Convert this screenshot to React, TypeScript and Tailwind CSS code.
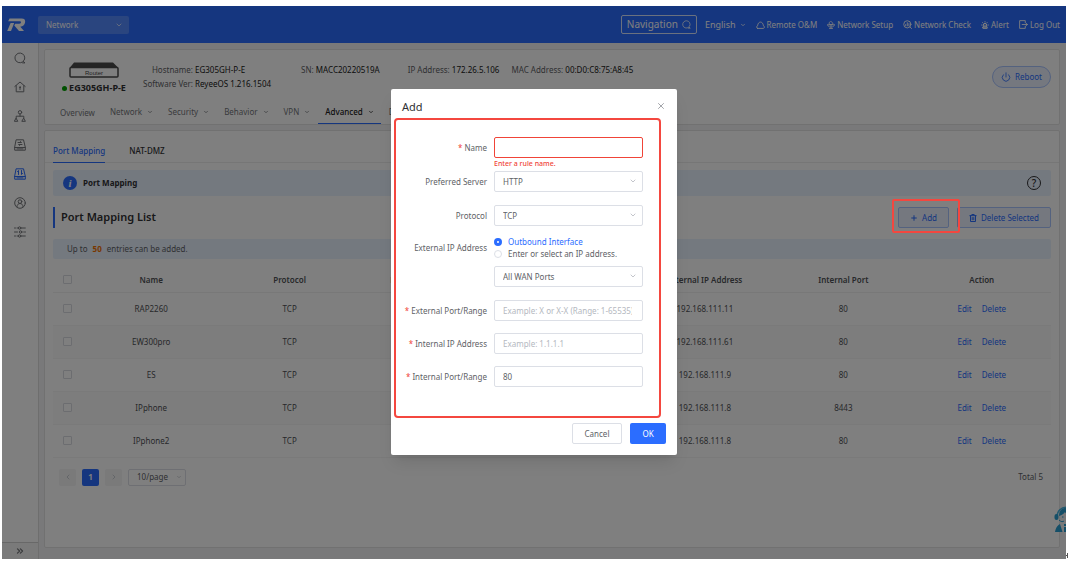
import React from "react";
import {
  ChevronDown,
  ChevronLeft,
  ChevronRight,
  ChevronsRight,
  Plus,
  Power,
  Siren,
  X,
} from "lucide-react";

const rows = [
  { name: "RAP2260", ip: "192.168.111.11", port: "80" },
  { name: "EW300pro", ip: "192.168.111.61", port: "80" },
  { name: "ES", ip: "192.168.111.9", port: "80" },
  { name: "IPphone", ip: "192.168.111.8", port: "8443" },
  { name: "IPphone2", ip: "192.168.111.8", port: "80" },
];

const line = {
  fill: "none",
  stroke: "currentColor",
  strokeWidth: 1,
  strokeLinecap: "round" as const,
  strokeLinejoin: "round" as const,
};

function Logo() {
  return (
    <svg viewBox="0 0 20 14" className="h-3.5 w-5 shrink-0" aria-label="Reyee" fill="#fff">
      <path d="M3.500 0.500H15.500Q20 0.500 19 4.800Q18.200 8.400 14.300 8.800L18 13H13L8.300 7.600L9.200 5.800H13Q14.700 5.800 15 4.500Q15.200 3.300 13.800 3.300H2.200Z" />
      <path d="M4.600 5H8.200L5 13H1.200Z" />
    </svg>
  );
}

function SearchIcon({ className }: { className: string }) {
  return (
    <svg viewBox="0 0 12 12" className={className} {...line}>
      <path d="M8.600 10A4.900 4.900 0 1 1 10.200 8.200L9 9.200L11 10.900H8.600" />
    </svg>
  );
}

function HomeIcon() {
  return (
    <svg viewBox="0 0 12 12" className="size-3" {...line}>
      <path d="M0.800 5.500 6 1l5.200 4.500M2.200 4.600v6.200h7.600V4.600M6 6.500v2" />
      <circle cx="6" cy="6.200" r="0.500" />
    </svg>
  );
}

function TreeIcon() {
  return (
    <svg viewBox="0 0 12 12" className="size-3" {...line}>
      <circle cx="6" cy="2.300" r="1.700" />
      <path d="M6 4v2.200M2.200 8.300V6.200h7.600v2.100" />
      <path d="M2.200 8.500 3.800 11.300H0.700ZM9.800 8.500 11.400 11.300H8.200Z" />
    </svg>
  );
}

function DriveIcon({ children }: { children: React.ReactNode }) {
  return (
    <svg viewBox="0 0 12 12" className="size-3" {...line}>
      <path d="M2.500 0.800h7L11.300 8.300v2.900H0.700V8.300ZM0.700 8.500h10.600M3 9.900h6" />
      {children}
    </svg>
  );
}

function UserIcon() {
  return (
    <svg viewBox="0 0 12 12" className="size-3" {...line}>
      <circle cx="6" cy="6" r="5.300" />
      <circle cx="6" cy="4.600" r="1.800" />
      <path d="M2.900 9.800C3 7.600 4.400 6.500 6 6.500s3 1.100 3.100 3.300" />
    </svg>
  );
}

function SlidersIcon() {
  return (
    <svg viewBox="0 0 12 12" className="size-3" {...line}>
      <path d="M0.500 2h1M3 2h1M7.300 2h4M0.500 6h3M8.800 6h0.500M10.500 6h1M0.500 10h1M3 10h1M7.300 10h4" />
      <circle cx="5.600" cy="2" r="1.200" />
      <circle cx="6.500" cy="6" r="1.200" />
      <circle cx="5.600" cy="10" r="1.200" />
    </svg>
  );
}

function RouterPicture() {
  return (
    <svg viewBox="0 0 50 16" className="h-4 w-[50px]">
      <path d="M5 0.500H44L49 5.500H1Z" fill="#4a4a4a" />
      <rect x="1" y="5.500" width="48" height="9.500" rx="1" fill="#fff" stroke="#4a4a4a" strokeWidth="1.500" />
      <text x="25" y="13" textAnchor="middle" fontSize="6" fill="#444" fontFamily="Liberation Sans, sans-serif">
        Router
      </text>
    </svg>
  );
}

function CloudIcon() {
  return (
    <svg viewBox="0 0 10 10" className="h-2.5 w-[9px]" {...line}>
      <path d="M1.800 8.800H8.200C9.800 8.300 9.700 6.300 8.200 5.800C8 3.500 6.800 1.800 5 1.800S2 3.500 1.800 5.800C0.300 6.300 0.200 8.300 1.800 8.800Z" />
    </svg>
  );
}

function SetupIcon() {
  return (
    <svg viewBox="0 0 10 10" className="size-2" {...line}>
      <path d="M5 0.600 7.300 2.500V4.300H2.700V2.500ZM5 4.300v5M0.800 4.800c0 2 1.700 2.700 4.200 2.700s4.200-0.700 4.200-2.700M0.800 4.800h8.400M3 9.300h4" />
    </svg>
  );
}

function CheckIcon() {
  return (
    <svg viewBox="0 0 10 10" className="size-[9px]" {...line}>
      <circle cx="4.800" cy="4.800" r="4" />
      <path d="M7.700 7.700 9.500 9.500M3 6.500V5M4.800 6.500V3M6.600 6.500V4" />
    </svg>
  );
}

function LogOutIcon() {
  return (
    <svg viewBox="0 0 10 10" className="size-[9px]" {...line}>
      <path d="M7 3V0.700H0.700V9.300H7V7M3.500 5H9.300M7.800 3.500 9.300 5 7.800 6.500" />
    </svg>
  );
}

function BinIcon() {
  return (
    <svg viewBox="0 0 8 8" className="size-2" {...line}>
      <path d="M0.800 1.700h6.400M2.800 1.500V0.500h2.400v1M1.500 1.700v5.800h5V1.700M3.200 3.500v2.300M4.800 3.500v2.300" />
    </svg>
  );
}

function AssistantPicture() {
  return (
    <svg viewBox="0 0 24 28" className="h-7 w-6">
      <path d="M3 12C3 -1 21 -1 21 12" fill="none" stroke="#46b4e0" strokeWidth="1.500" />
      <path d="M5 11C5 3 12 2 14 4C19 5 19 9 19 11C15 11 12 9 11 7C9 10 7 10 5 11Z" fill="#2a9fd0" />
      <rect x="0.500" y="9" width="4" height="6" rx="2" fill="#2a9fd0" />
      <path d="M8 12h1.500M5 15C7 17 9 17 10 16" fill="none" stroke="#2a9fd0" strokeWidth="1" />
      <path d="M1 27C2 22 4 20 6 19L8.500 27ZM10 19h4v2h-4ZM10 22h4v5h-4Z" fill="#2a9fd0" />
    </svg>
  );
}

function Meta({ label, value }: { label: string; value: string }) {
  return (
    <p>
      <span className="text-[#606266]">{label}:</span> <span className="text-[#202020]">{value}</span>
    </p>
  );
}

function Field({
  id,
  label,
  required,
  children,
}: {
  id: string;
  label: string;
  required?: boolean;
  children: React.ReactNode;
}) {
  return (
    <div className="relative flex items-center">
      <label htmlFor={id} className="w-24 shrink-0 pr-[7px] text-right whitespace-nowrap text-[#606266]">
        {required && <span className="text-[#f04438]">* </span>}
        {label}
      </label>
      {children}
    </div>
  );
}

const box = "h-[21px] w-full min-w-0 rounded-xs border border-[#dcdfe6] bg-white pr-2.5 pl-2 text-[#606266] outline-none placeholder:text-[#b4b8c0]";

function Dropdown({ id, value }: { id: string; value: string }) {
  return (
    <div className="relative w-full">
      <select id={id} defaultValue={value} className={`${box} block appearance-none`}>
        <option>{value}</option>
      </select>
      <ChevronDown className="pointer-events-none absolute top-1.5 right-1.5 size-2 text-[#a4a8b0]" strokeWidth={2} />
    </div>
  );
}

function Sidebar() {
  return (
    <aside className="flex w-[37px] shrink-0 flex-col border-r border-[#dcdcdc] bg-white text-[#74767a]">
      <nav className="flex flex-1 flex-col items-center gap-[17px] pt-[9px]">
        <a href="#search" aria-label="Search"><SearchIcon className="size-3" /></a>
        <a href="#home" aria-label="Home"><HomeIcon /></a>
        <a href="#topology" aria-label="Topology"><TreeIcon /></a>
        <a href="#switch" aria-label="Devices">
          <DriveIcon><path d="M4 3.500h3.500l-1-1M8 5.500H4.500l1 1" /></DriveIcon>
        </a>
        <a href="#router" aria-label="Router" className="text-[#2b6dff]">
          <DriveIcon><path d="M4.500 6.500V2.500l-1 1.200M7.500 2.500v4l1-1.200" /></DriveIcon>
        </a>
        <a href="#clients" aria-label="Clients"><UserIcon /></a>
        <a href="#system" aria-label="System"><SlidersIcon /></a>
      </nav>
      <button aria-label="Expand menu" className="flex h-[17px] items-center justify-center border-t border-[#d0d0d0] bg-[#f4f4f4]">
        <ChevronsRight className="size-2.5" strokeWidth={3} />
      </button>
    </aside>
  );
}

function TopBar() {
  return (
    <header className="flex h-[37px] shrink-0 items-center bg-[#2b6dff] pr-1.5 pl-1 text-[8px] text-white">
      <Logo />
      <div className="relative ml-3 w-[91px]">
        <select aria-label="Scope" defaultValue="Network" className="block h-[18px] w-full appearance-none rounded-xs bg-white/20 px-2 text-[8px] outline-none">
          <option>Network</option>
        </select>
        <ChevronDown className="pointer-events-none absolute top-[5px] right-1.5 size-2" />
      </div>
      <button className="ml-auto flex h-[19px] items-center gap-1 rounded-xs border border-white/80 px-[5px] text-[10px]">
        Navigation <SearchIcon className="size-[9px]" />
      </button>
      <button className="ml-2 flex items-center gap-1 text-[9px]">
        English <ChevronDown className="size-1.5" strokeWidth={3} />
      </button>
      <nav className="ml-2.5 flex gap-2.5 whitespace-nowrap">
        <a href="#remote" className="flex items-center gap-0.5"><CloudIcon />Remote O&amp;M</a>
        <a href="#setup" className="flex items-center gap-0.5"><SetupIcon />Network Setup</a>
        <a href="#check" className="flex items-center gap-0.5"><CheckIcon />Network Check</a>
        <a href="#alert" className="flex items-center gap-0.5"><Siren className="size-2" strokeWidth={3} />Alert</a>
        <a href="#logout" className="flex items-center gap-0.5"><LogOutIcon />Log Out</a>
      </nav>
    </header>
  );
}

function DeviceCard() {
  const menu = ["Network", "Security", "Behavior", "VPN", "Advanced", "Diagnostics"];
  return (
    <section className="rounded-xs border border-[#e2e2e2] bg-white">
      <div className="flex h-[51px] items-start pt-3 pr-2 pl-[15px]">
        <div className="flex w-[68px] flex-col items-center">
          <RouterPicture />
          <p className="mt-1 flex items-center gap-0.5 text-[9px] leading-3 font-bold whitespace-nowrap text-[#303133]">
            <span className="size-[5px] rounded-full bg-[#00a000]" />
            EG305GH-P-E
          </p>
        </div>
        <div className="mt-px ml-[15px] flex items-start text-[8px] leading-[14px] whitespace-nowrap">
          <dl className="grid grid-cols-[auto_auto] gap-x-0.5">
            <dt className="text-right text-[#606266]">Hostname:</dt>
            <dd className="text-[#202020]">EG305GH-P-E</dd>
            <dt className="text-right text-[#606266]">Software Ver:</dt>
            <dd className="text-[#202020]">ReyeeOS 1.216.1504</dd>
          </dl>
          <div className="ml-[30px] flex gap-7">
            <Meta label="SN" value="MACC20220519A" />
            <div className="flex gap-3">
              <Meta label="IP Address" value="172.26.5.106" />
              <Meta label="MAC Address" value="00:D0:C8:75:A8:45" />
            </div>
          </div>
        </div>
        <button className="mt-1 ml-auto flex h-[22px] items-center gap-1 rounded-full border border-[#a9c4ff] bg-[#eaf1ff] px-2 text-[8px] text-[#2b6dff]">
          <Power className="size-2.5" strokeWidth={2} /> Reboot
        </button>
      </div>
      <nav className="flex h-[23px] gap-[15px] pl-[15px] text-[8px] whitespace-nowrap text-[#74767a]">
        <a href="#overview" className="flex items-center">Overview</a>
        {menu.map((m) => (
          <a
            key={m}
            href={`#${m.toLowerCase()}`}
            className={
              m === "Advanced"
                ? "-mx-[7px] flex items-center gap-[5px] border-b border-[#2b6dff] px-[7px] font-medium text-[#202020]"
                : "flex items-center gap-[5px] border-b border-transparent"
            }
          >
            {m} <ChevronDown className="size-1.5" strokeWidth={3} />
          </a>
        ))}
      </nav>
    </section>
  );
}

function MappingTable() {
  const heads = ["Name", "Protocol", "External IP Address", "", "Internal IP Address", "Internal Port", "Action"];
  const check = "block size-[9px] appearance-none rounded-[1px] border border-[#d8dae0] bg-white";
  return (
    <table className="mt-[9px] w-full table-fixed border-collapse text-center text-[8px] text-[#505256]">
      <thead>
        <tr className="h-6 border-b border-[#f0f0f0]">
          <th className="w-[29px] pl-2.5"><input type="checkbox" aria-label="Select all" className={check} /></th>
          {heads.map((h, i) => (
            <th key={i} className="font-semibold whitespace-nowrap">{h}</th>
          ))}
        </tr>
      </thead>
      <tbody>
        {rows.map((r) => (
          <tr key={r.name} className="h-[33px] border-b border-[#f4f4f4] even:bg-[#fafafa]">
            <td className="pl-2.5"><input type="checkbox" aria-label={`Select ${r.name}`} className={check} /></td>
            <td>{r.name}</td>
            <td>TCP</td>
            <td />
            <td />
            <td>{r.ip}</td>
            <td>{r.port}</td>
            <td className="text-[#2b6dff]">
              <button className="mr-2.5">Edit</button>
              <button>Delete</button>
            </td>
          </tr>
        ))}
      </tbody>
    </table>
  );
}

function MappingCard() {
  const action = "flex h-[21px] items-center justify-center gap-1 rounded-xs border border-[#a9c4ff] bg-[#eaf1ff] text-[#2b6dff]";
  const pager = "flex size-[17px] items-center justify-center rounded-xs bg-[#f4f4f5] text-[#b4b8c0]";
  return (
    <section className="flex flex-1 flex-col rounded-xs border border-[#e2e2e2] bg-white px-2 text-[8px]">
      <nav className="-mx-2 flex h-8 gap-6 border-b border-[#ececec] px-2">
        <a href="#port-mapping" className="-mb-px flex items-center border-b border-[#2b6dff] pt-2 font-medium text-[#2b6dff]">Port Mapping</a>
        <a href="#nat-dmz" className="flex items-center pt-2 font-medium text-[#303133]">NAT-DMZ</a>
      </nav>
      <div className="mt-[7px] flex h-[26px] items-center justify-between rounded-xs bg-[#e9f2ff] px-2.5">
        <h2 className="flex items-center gap-1.5 font-bold text-[#303133]">
          <span className="flex size-3.5 items-center justify-center rounded-full bg-[#2b6dff] font-['Liberation_Serif',serif] text-[11px] leading-none text-white italic">i</span>
          Port Mapping
        </h2>
        <button aria-label="Help" className="flex size-3.5 items-center justify-center rounded-full border border-[#303133] text-[10px] leading-none font-medium text-[#303133]">?</button>
      </div>
      <div className="mt-[11px] flex h-[21px] items-center">
        <h1 className="flex h-full items-center border-l-2 border-[#2b6dff] pl-1.5 text-[11px] font-semibold text-[#303133]">Port Mapping List</h1>
        <div className="relative ml-auto">
          <button className={`${action} w-[51px]`}><Plus className="size-2" strokeWidth={3} /> Add</button>
          <span className="pointer-events-none absolute -top-2 -left-1.5 z-30 h-[34px] w-[68px] rounded-xs border-2 border-[#f4473f]" />
        </div>
        <button className={`${action} ml-2 w-[94px]`}><BinIcon /> Delete Selected</button>
      </div>
      <p className="mt-[11px] flex h-5 items-center rounded-xs bg-[#e9f2ff] px-3.5 text-[#606266]">
        Up to <b className="mx-[5px] text-[#f07000]">50</b> entries can be added.
      </p>
      <MappingTable />
      <div className="mt-[11px] flex items-center gap-1.5 pr-2 pl-1.5 text-[#606266]">
        <button aria-label="Previous page" className={pager}><ChevronLeft className="size-2" /></button>
        <button className="size-[17px] rounded-xs bg-[#2b6dff] font-bold text-white">1</button>
        <button aria-label="Next page" className={pager}><ChevronRight className="size-2" /></button>
        <div className="relative">
          <select aria-label="Page size" defaultValue="10/page" className="block h-[17px] w-[58px] appearance-none rounded-xs border border-[#dcdfe6] px-2 outline-none">
            <option>10/page</option>
          </select>
          <ChevronDown className="pointer-events-none absolute top-[5px] right-1 size-1.5 text-[#a4a8b0]" />
        </div>
        <span className="ml-auto">Total 5</span>
      </div>
    </section>
  );
}

function AddDialog() {
  const radio = "size-2 appearance-none rounded-full border border-[#dcdfe6] bg-white checked:border-[3px] checked:border-[#2b6dff]";
  return (
    <div role="dialog" aria-label="Add" className="absolute top-[83px] left-1/2 z-40 w-[286px] -translate-x-1/2 rounded-xs bg-white text-[8px] shadow-lg">
      <div className="flex h-[29px] items-center justify-between pt-2 pr-[11px] pl-[11px]">
        <h2 className="text-[11px] text-[#303133]">Add</h2>
        <button aria-label="Close" className="-mt-1 text-[#909399]"><X className="size-2.5" strokeWidth={2} /></button>
      </div>
      <form className="mr-4 ml-[3px] flex h-[300px] flex-col rounded-sm border-2 border-[#f4473f] pt-[17px] pr-4 pl-0.5">
        <Field id="name" label="Name" required>
          <input id="name" className="h-[21px] w-full min-w-0 rounded-xs border border-[#f04438] bg-white px-2 text-[#606266] outline-none" />
          <span className="absolute top-[21px] left-24 text-[7px] leading-3 font-medium text-[#f04438]">Enter a rule name.</span>
        </Field>
        <div className="mt-[13px] flex flex-col gap-[13px]">
          <Field id="server" label="Preferred Server"><Dropdown id="server" value="HTTP" /></Field>
          <Field id="protocol" label="Protocol"><Dropdown id="protocol" value="TCP" /></Field>
        </div>
        <fieldset className="mt-2.5 flex items-start">
          <label htmlFor="wan" className="w-24 shrink-0 pr-[7px] text-right leading-6 text-[#606266]">External IP Address</label>
          <div className="w-full min-w-0 whitespace-nowrap">
            <label className="flex h-3 items-center gap-1.5 text-[#2b6dff]"><input type="radio" name="ip" defaultChecked className={radio} />Outbound Interface</label>
            <label className="mb-1.5 flex h-3 items-center gap-1.5 text-[#606266]"><input type="radio" name="ip" className={radio} />Enter or select an IP address.</label>
            <Dropdown id="wan" value="All WAN Ports" />
          </div>
        </fieldset>
        <div className="mt-[13px] flex flex-col gap-3">
          <Field id="ext-port" label="External Port/Range" required><input id="ext-port" placeholder="Example: X or X-X (Range: 1-65535)" className={box} /></Field>
          <Field id="int-ip" label="Internal IP Address" required><input id="int-ip" placeholder="Example: 1.1.1.1" className={box} /></Field>
          <Field id="int-port" label="Internal Port/Range" required><input id="int-port" defaultValue="80" className={box} /></Field>
        </div>
      </form>
      <div className="flex justify-end gap-2 pt-[5px] pr-[11px] pb-[11px]">
        <button className="h-[21px] w-[50px] rounded-xs border border-[#dcdfe6] text-[#606266]">Cancel</button>
        <button className="h-[21px] w-9 rounded-xs bg-[#2b6dff] text-white">OK</button>
      </div>
    </div>
  );
}

export default function App() {
  return (
    <div className="relative flex min-h-screen flex-col bg-white px-0.5 py-1.5 font-['Noto_Sans',sans-serif]">
      <div className="relative flex flex-1 flex-col overflow-hidden bg-[#f2f3f5]">
        <TopBar />
        <div className="flex flex-1">
          <Sidebar />
          <main className="flex min-w-0 flex-1 flex-col gap-[5px] pt-1.5 pr-1.5 pb-[11px] pl-[5px]">
            <DeviceCard />
            <MappingCard />
          </main>
        </div>
        <div className="absolute -right-3 bottom-[26px]"><AssistantPicture /></div>
        <div className="absolute inset-0 z-20 bg-black/50" />
        <AddDialog />
      </div>
      <svg viewBox="0 0 2 5" className="absolute right-0 bottom-[7px] h-[5px] w-0.5" fill="none" stroke="#555">
        <path d="M0 2.500H2M1.500 0V5" />
      </svg>
    </div>
  );
}
